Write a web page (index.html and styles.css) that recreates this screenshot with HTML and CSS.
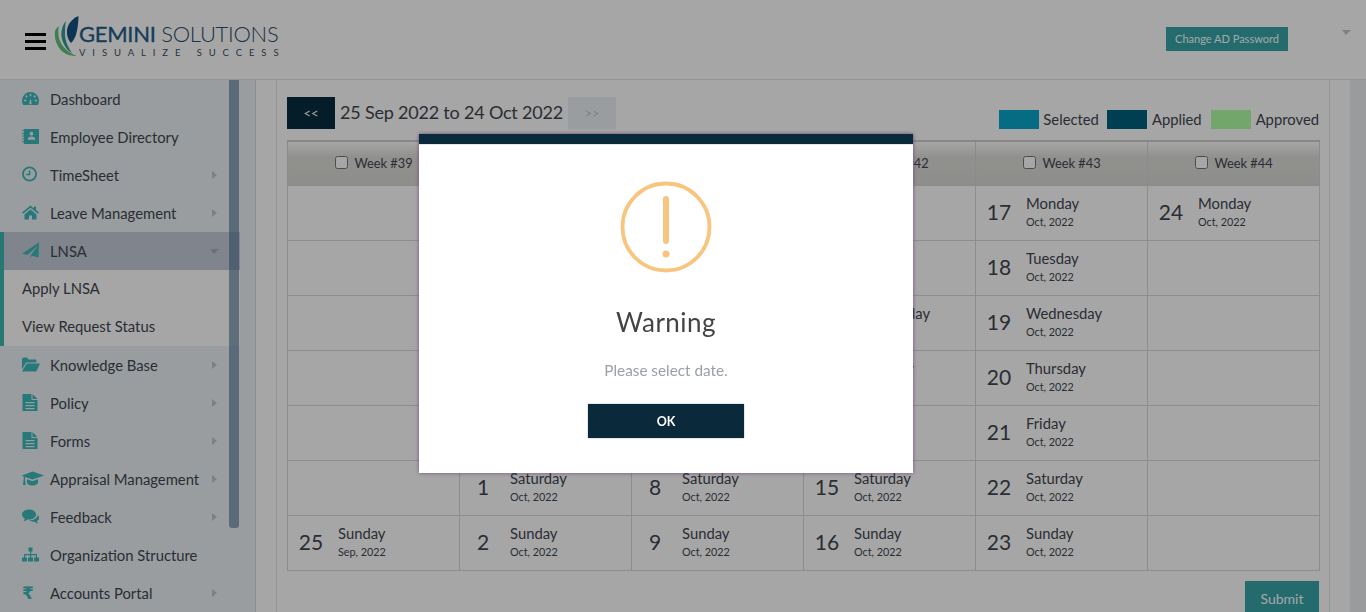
FILE: index.html
```html
<!DOCTYPE html>
<html lang="en">
<head>
<meta charset="utf-8">
<title>Apply LNSA</title>
<link rel="stylesheet" href="styles.css">
</head>
<body>
<header class="topbar">
  <div class="burger"><span></span><span></span><span></span></div>
  <div class="logo">
    <svg class="logo-leaf" viewBox="0 0 26 42" width="26" height="42">
      <path fill="#62c27a" d="M1 16C0 24 3 32 9 37c4 3 9 4 14 4C15 38 9 33 6 26 4 22 4 14 5 11 3 12 2 14 1 16z"/>
      <path fill="#2f9c96" d="M12 6C7 12 6 20 9 27c2 5 5 9 9 11-4-6-7-12-7-19 0-5 0-9 1-13z"/>
      <path fill="#14507f" d="M24.500 1C17 4 12 11 13 19c.5 4 2 7 4 9 4-4 7-10 7.500-27z"/>
    </svg>
    <div class="logo-text">
      <div class="logo-name"><b>GEMINI</b> SOLUTIONS</div>
      <div class="logo-tag">VISUALIZE SUCCESS</div>
    </div>
  </div>
  <div class="top-right">
    <a class="ad-btn">Change AD Password</a>
    <span class="user-caret"></span>
  </div>
</header>

<div class="shell">
  <nav class="sidebar">
    <ul class="menu">
      <li class="item"><svg class="ico" viewBox="0 0 18 14"><path fill-rule="evenodd" d="M9 0a9 9 0 0 1 9 9c0 2-.5 3.500-1.300 5H1.300A9 9 0 0 1 0 9a9 9 0 0 1 9-9zM8.200 2v2.500h1.600V2zM4.400 3.300 3.200 4.500l1.600 1.600L6 5zm9.200 0L12 5l1.200 1.100 1.600-1.600zM2 8.200v1.600h2.600V8.200zm11.400 0v1.600H16V8.200zM7.700 13h2.600l-.8-5h-1z"/></svg>Dashboard</li>
      <li class="item"><svg class="ico" viewBox="0 0 18 18"><path fill-rule="evenodd" d="M2 1h16v16H2v-2H0v-1h2v-2H0v-1h2V9H0V8h2V6H0V5h2V3H0V2h2zm8 3a2 2 0 1 0 0 4 2 2 0 0 0 0-4zM6 12.500h8c0-2.500-1.500-3.500-4-3.500s-4 1-4 3.500z"/></svg>Employee Directory</li>
      <li class="item sub"><svg class="ico" viewBox="0 0 17 16"><path fill-rule="evenodd" d="M7.500 0a7.500 7.500 0 1 1 0 15A7.500 7.500 0 0 1 7.500 0zm0 1.800a5.700 5.700 0 1 0 0 11.400 5.700 5.700 0 0 0 0-11.400zM6.800 4h1.500v4.800H4.200V7.300h2.600z"/></svg>TimeSheet<i class="arrow"></i></li>
      <li class="item sub"><svg class="ico" viewBox="0 0 17 14"><path d="M8.500 0 0 7l1 1.200 7.500-6 7.500 6L17 7l-3-2.500V1h-2v1.900zM2.500 9l6-5 6 5v5H10v-4H7v4H2.500z"/></svg>Leave Management<i class="arrow"></i></li>
      <li class="item sub active-head"><svg class="ico" viewBox="0 0 18 17"><path d="M18 0 0 12l6 1L17 3 9 14l-1 3 2.500-3 7 2z"/></svg>LNSA<i class="arrow down"></i></li>
      <li class="subitem">Apply LNSA</li>
      <li class="subitem">View Request Status</li>
      <li class="item sub"><svg class="ico wide" viewBox="0 0 18 14"><path d="M0 2c0-1 .7-2 2-2h3l1.500 2H13c1 0 1.500.7 1.500 1.500V5H4L0 12zM4.700 6H18l-3.700 8H0z"/></svg>Knowledge Base<i class="arrow"></i></li>
      <li class="item sub"><svg class="ico" viewBox="0 0 16 17"><path fill-rule="evenodd" d="M0 0h9v6h6v11H0zm10 0 5 5h-5zM3 8v1.200h9V8zm0 3v1.200h9V11zm0 3v1.200h9V14z"/></svg>Policy<i class="arrow"></i></li>
      <li class="item sub"><svg class="ico" viewBox="0 0 16 17"><path fill-rule="evenodd" d="M0 0h9v6h6v11H0zm10 0 5 5h-5zM3 8v1.200h9V8zm0 3v1.200h9V11zm0 3v1.200h9V14z"/></svg>Forms<i class="arrow"></i></li>
      <li class="item sub"><svg class="ico wider" viewBox="0 0 22 14"><path d="M10.500 0 22 4l-11.500 4L3 5.400V8l.7 5.500H1L1.700 8V5L0 4zM5 7.800l5.500 2 5.500-2V11c0 1.500-2.500 3-5.500 3S5 12.500 5 11z"/></svg>Appraisal Management<i class="arrow"></i></li>
      <li class="item sub"><svg class="ico" viewBox="0 0 17 14"><path d="M7 0c4 0 7 2.300 7 5s-3 5-7 5l-1.500-.1C4.500 10.800 3 11.300 1.500 11.500c.7-.8 1.200-1.700 1.300-2.500C1 8.200 0 6.700 0 5c0-2.700 3-5 7-5zm8.500 5.500c1 .8 1.500 1.800 1.500 2.900 0 1.300-.8 2.500-2.200 3.200.1.700.5 1.500 1.200 2.200-1.400-.2-2.700-.8-3.600-1.600-2 .2-4-.3-5.200-1.400 4.400.2 8.300-2 8.300-5.300z"/></svg>Feedback<i class="arrow"></i></li>
      <li class="item"><svg class="ico" viewBox="0 0 17 14"><path d="M6.500 0h4v4H9.200v2.500H15V10h2v4h-5v-4h1.800V7.700H9.200V10H11v4H6v-4h2V7.700H3.200V10H5v4H0v-4h2V6.500h6V4H6.500z"/></svg>Organization Structure</li>
      <li class="item sub"><span class="rupee">₹</span>Accounts Portal<i class="arrow"></i></li>
    </ul>
    <div class="thumb"></div>
  </nav>

  <div class="gutter"></div>

  <main class="panel">
    <div class="toolbar">
      <div class="range">
        <button class="nav-btn">&lt;&lt;</button>
        <span class="range-text">25 Sep 2022 to 24 Oct 2022</span>
        <button class="nav-btn off">&gt;&gt;</button>
      </div>
      <div class="legend">
        <span class="swatch selected"></span><span class="legend-label">Selected</span>
        <span class="swatch applied"></span><span class="legend-label">Applied</span>
        <span class="swatch approved"></span><span class="legend-label">Approved</span>
      </div>
    </div>

    <table class="cal">
      <thead>
        <tr>
          <th><input type="checkbox"> Week #39</th>
          <th><input type="checkbox"> Week #40</th>
          <th><input type="checkbox"> Week #41</th>
          <th><input type="checkbox"> Week #42</th>
          <th><input type="checkbox"> Week #43</th>
          <th><input type="checkbox"> Week #44</th>
        </tr>
      </thead>
      <tbody>
        <tr>
          <td></td>
          <td><div class="day"><span class="num">26</span><span class="meta"><span class="name">Monday</span><span class="mon">Sep, 2022</span></span></div></td>
          <td><div class="day"><span class="num">3</span><span class="meta"><span class="name">Monday</span><span class="mon">Oct, 2022</span></span></div></td>
          <td><div class="day"><span class="num">10</span><span class="meta"><span class="name">Monday</span><span class="mon">Oct, 2022</span></span></div></td>
          <td><div class="day"><span class="num">17</span><span class="meta"><span class="name">Monday</span><span class="mon">Oct, 2022</span></span></div></td>
          <td><div class="day"><span class="num">24</span><span class="meta"><span class="name">Monday</span><span class="mon">Oct, 2022</span></span></div></td>
        </tr>
        <tr>
          <td></td>
          <td><div class="day"><span class="num">27</span><span class="meta"><span class="name">Tuesday</span><span class="mon">Sep, 2022</span></span></div></td>
          <td><div class="day"><span class="num">4</span><span class="meta"><span class="name">Tuesday</span><span class="mon">Oct, 2022</span></span></div></td>
          <td><div class="day"><span class="num">11</span><span class="meta"><span class="name">Tuesday</span><span class="mon">Oct, 2022</span></span></div></td>
          <td><div class="day"><span class="num">18</span><span class="meta"><span class="name">Tuesday</span><span class="mon">Oct, 2022</span></span></div></td>
          <td></td>
        </tr>
        <tr>
          <td></td>
          <td><div class="day"><span class="num">28</span><span class="meta"><span class="name">Wednesday</span><span class="mon">Sep, 2022</span></span></div></td>
          <td><div class="day"><span class="num">5</span><span class="meta"><span class="name">Wednesday</span><span class="mon">Oct, 2022</span></span></div></td>
          <td><div class="day"><span class="num">12</span><span class="meta"><span class="name">Wednesday</span><span class="mon">Oct, 2022</span></span></div></td>
          <td><div class="day"><span class="num">19</span><span class="meta"><span class="name">Wednesday</span><span class="mon">Oct, 2022</span></span></div></td>
          <td></td>
        </tr>
        <tr>
          <td></td>
          <td><div class="day"><span class="num">29</span><span class="meta"><span class="name">Thursday</span><span class="mon">Sep, 2022</span></span></div></td>
          <td><div class="day"><span class="num">6</span><span class="meta"><span class="name">Thursday</span><span class="mon">Oct, 2022</span></span></div></td>
          <td><div class="day"><span class="num">13</span><span class="meta"><span class="name">Thursday</span><span class="mon">Oct, 2022</span></span></div></td>
          <td><div class="day"><span class="num">20</span><span class="meta"><span class="name">Thursday</span><span class="mon">Oct, 2022</span></span></div></td>
          <td></td>
        </tr>
        <tr>
          <td></td>
          <td><div class="day"><span class="num">30</span><span class="meta"><span class="name">Friday</span><span class="mon">Sep, 2022</span></span></div></td>
          <td><div class="day"><span class="num">7</span><span class="meta"><span class="name">Friday</span><span class="mon">Oct, 2022</span></span></div></td>
          <td><div class="day"><span class="num">14</span><span class="meta"><span class="name">Friday</span><span class="mon">Oct, 2022</span></span></div></td>
          <td><div class="day"><span class="num">21</span><span class="meta"><span class="name">Friday</span><span class="mon">Oct, 2022</span></span></div></td>
          <td></td>
        </tr>
        <tr>
          <td></td>
          <td><div class="day"><span class="num">1</span><span class="meta"><span class="name">Saturday</span><span class="mon">Oct, 2022</span></span></div></td>
          <td><div class="day"><span class="num">8</span><span class="meta"><span class="name">Saturday</span><span class="mon">Oct, 2022</span></span></div></td>
          <td><div class="day"><span class="num">15</span><span class="meta"><span class="name">Saturday</span><span class="mon">Oct, 2022</span></span></div></td>
          <td><div class="day"><span class="num">22</span><span class="meta"><span class="name">Saturday</span><span class="mon">Oct, 2022</span></span></div></td>
          <td></td>
        </tr>
        <tr>
          <td><div class="day"><span class="num">25</span><span class="meta"><span class="name">Sunday</span><span class="mon">Sep, 2022</span></span></div></td>
          <td><div class="day"><span class="num">2</span><span class="meta"><span class="name">Sunday</span><span class="mon">Oct, 2022</span></span></div></td>
          <td><div class="day"><span class="num">9</span><span class="meta"><span class="name">Sunday</span><span class="mon">Oct, 2022</span></span></div></td>
          <td><div class="day"><span class="num">16</span><span class="meta"><span class="name">Sunday</span><span class="mon">Oct, 2022</span></span></div></td>
          <td><div class="day"><span class="num">23</span><span class="meta"><span class="name">Sunday</span><span class="mon">Oct, 2022</span></span></div></td>
          <td></td>
        </tr>
      </tbody>
    </table>

    <div class="actions"><button class="submit">Submit</button></div>
  </main>

  <div class="gutter-right"></div>
  <div class="page-scroll"></div>
</div>

<div class="overlay"></div>

<section class="modal">
  <div class="modal-bar"></div>
  <div class="modal-body">
    <svg class="warn" viewBox="0 0 92 92" width="92" height="92">
      <circle cx="46" cy="46" r="43.500" fill="none" stroke="#f8c57f" stroke-width="3.800"/>
      <rect x="43" y="15" width="6" height="48" rx="3" fill="#f8c57f"/>
      <circle cx="46" cy="73" r="3.500" fill="#f8c57f"/>
    </svg>
    <h2 class="modal-title">Warning</h2>
    <p class="modal-text">Please select date.</p>
    <button class="ok">OK</button>
  </div>
</section>
</body>
</html>
```

FILE: styles.css
```css
* { box-sizing: border-box; }
html, body { margin: 0; height: 612px; overflow: hidden; }
body {
  font-family: "Lato", "Liberation Sans", sans-serif;
  color: #414750;
  background: #fff;
  display: flex;
  flex-direction: column;
}
ul { list-style: none; margin: 0; padding: 0; }

/* header */
.topbar {
  height: 80px;
  flex: none;
  display: flex;
  align-items: center;
  padding-left: 25px;
  background: #fff;
  border-bottom: 1px solid #dbe3e8;
}
.burger { width: 21px; display: flex; flex-direction: column; gap: 4px; margin-top: 4px; }
.burger span { height: 3px; background: #000; display: block; }
.logo { display: flex; align-items: flex-start; margin-left: 8px; margin-top: -1px; }
.logo-leaf { flex: none; margin-top: -5px; margin-right: -1px; }
.logo-text { color: #2c5068; padding-top: 2px; }
.logo-name { font-size: 22px; line-height: 24px; white-space: nowrap; font-weight: 300; letter-spacing: -.3px; }
.logo-name b { font-weight: 400; color: #1f5f8c; -webkit-text-stroke: .35px #1f5f8c; }
.logo-tag { font-size: 9.500px; line-height: 11px; letter-spacing: 6.900px; white-space: nowrap; margin-top: 1px; color: #3a4f5c; }
.top-right { margin-left: auto; display: flex; align-items: flex-start; height: 100%; padding-top: 27px; }
.ad-btn {
  width: 122px; height: 24px;
  background: #36a5a8; color: #fff;
  font-size: 11px; line-height: 24px; text-align: center;
}
.user-caret {
  width: 0; height: 0;
  border-left: 4px solid transparent;
  border-right: 5px solid transparent;
  border-top: 5px solid #c3c6c9;
  margin: 3px 15px 0 54px;
}

/* layout */
.shell { flex: 1; display: flex; min-height: 0; overflow: hidden; }

/* sidebar */
.sidebar { width: 240px; flex: none; position: relative; background: #ecf1f5; }
.item {
  height: 38px;
  display: flex;
  align-items: center;
  font-size: 14.800px;
  padding: 0 0 1px 22px;
  position: relative;
  white-space: nowrap;
}
.ico { width: 17px; height: 17px; fill: #3db8b8; margin-right: 11px; flex: none; }
.ico.wide { width: 18px; margin-right: 10px; }
.ico.wider { width: 22px; margin-right: 6px; }
.rupee { width: 17px; margin-right: 11px; color: #3db8b8; font-size: 17px; font-weight: 700; font-family: "DejaVu Sans", sans-serif; }
.arrow {
  position: absolute; right: 23px; top: 50%;
  margin-top: -4px;
  border-left: 5px solid #c0c5cb;
  border-top: 4px solid transparent;
  border-bottom: 4px solid transparent;
}
.arrow.down {
  right: 21px; margin-top: -2px;
  border-top: 5px solid #a8adb7;
  border-left: 4px solid transparent;
  border-right: 5px solid transparent;
  border-bottom: 0;
}
.active-head { background: #c4cbd9; border-left: 4px solid #3db8b0; padding-left: 18px; }
.subitem {
  height: 38px; line-height: 37px;
  font-size: 14.800px;
  padding-left: 18px;
  background: #fff;
  border-left: 4px solid #3db8b0;
}
.thumb {
  position: absolute; left: 229px; top: 0;
  width: 10px; height: 448px;
  background: rgba(73, 111, 145, .6);
  border-radius: 0 0 3px 3px;
}

/* gutters */
.gutter { width: 16px; flex: none; background: #edf1f5; border-right: 1px solid #d3dadf; }
.gutter + .panel { margin-left: 20px; }
.panel {
  width: 1054px; flex: none;
  background: #fff;
  border-left: 1px solid #dfe5e8;
  border-right: 1px solid #dfe5e8;
  padding: 17px 9px 0 10px;
}
.gutter-right { width: 20px; flex: none; }
.page-scroll { flex: 1; background: #eceef2; }

/* toolbar */
.toolbar { display: flex; justify-content: space-between; align-items: flex-end; height: 32px; margin-bottom: 11px; }
.range { display: flex; align-items: center; height: 32px; }
.nav-btn {
  width: 48px; height: 32px;
  border: 0; padding: 0;
  background: #082b40; color: #fff;
  font: 13px "Lato", sans-serif;
}
.nav-btn.off { background: #ecf1f5; color: #c4c8cc; }
.range-text { font-size: 18px; letter-spacing: -.2px; margin: 0 5px; padding-bottom: 2px; white-space: nowrap; width: 223px; }
.legend { display: flex; align-items: center; height: 19px; margin-right: 1px; }
.swatch { width: 40px; height: 19px; margin-right: 4px; }
.selected { background: #0aa6cb; }
.applied { background: #00617e; margin-left: 8px; margin-right: 5px; }
.approved { background: #afffa5; margin-left: 9px; margin-right: 5px; }
.legend-label { font-size: 14.800px; line-height: 21px; }

/* table */
.cal {
  width: 1033px;
  table-layout: fixed;
  border-collapse: collapse;
}
.cal th {
  height: 44px;
  font-weight: 400;
  font-size: 12.800px;
  border: 1px solid #d6d6d6;
  border-top: 2px solid #d0d0d0;
  background: linear-gradient(#fff, #dededb 35%, #dadad6);
  text-align: center;
  padding: 0;
}
.cal th input { margin: 0 3px 0 1px; vertical-align: -1px; }
.cal td {
  height: 55px;
  border: 1px solid #d9d9d9;
  padding: 0;
}
.day { display: flex; align-items: center; height: 54px; padding-bottom: 2px; }
.num { width: 46px; margin-right: 4px; text-align: center; font-size: 21px; flex: none; }
.meta { display: flex; flex-direction: column; }
.name { font-size: 14.800px; line-height: 18px; white-space: nowrap; }
.mon { font-size: 10.800px; line-height: 17px; margin-top: 1px; white-space: nowrap; }
.actions { display: flex; justify-content: flex-end; margin: 10px 1px 0 0; }
.submit {
  width: 74px; height: 36px;
  background: #36a5a8; color: #fff;
  border: 0; padding: 0;
  font: 14px "Lato", sans-serif;
}

/* dialog */
.overlay { position: fixed; inset: 0; background: rgba(0, 0, 0, .35); }
.modal {
  position: fixed;
  left: 419px; top: 134px;
  width: 494px; height: 339px;
  background: #fff;
  box-shadow: 0 0 4px rgba(100, 50, 110, .75);
}
.modal-bar { height: 10px; background: #0a2a3c; box-shadow: 0 0 1px #5a7584; }
.modal-body { display: flex; flex-direction: column; align-items: center; padding-top: 37px; }
.warn { display: block; }
.modal-title { font-size: 26px; line-height: 32px; font-weight: 400; color: #444; margin: 33px 0 0; letter-spacing: .45px; }
.modal-text { font-size: 15.300px; line-height: 20px; color: #9aa0a6; margin: 22px 0 0; }
.ok {
  width: 156px; height: 34px; margin-top: 24px;
  border: 0; padding: 0;
  background: #0a2a3c; color: #fff;
  box-shadow: 0 0 1px #5a7584;
  font: 700 12.500px "Lato", sans-serif;
}
```
